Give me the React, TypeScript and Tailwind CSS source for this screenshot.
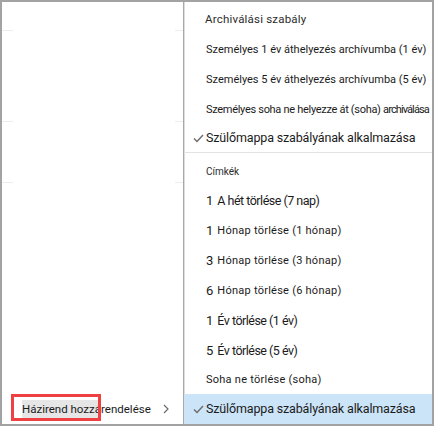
import React, { FC } from 'react'

const font = { fontFamily: 'Roboto, "Liberation Sans", Arial, sans-serif' }

const Check: FC = () => (
  <svg width="11" height="9" viewBox="0 0 11 9" className="shrink-0">
    <path d="M1 4.5 L4 7.5 L10 1" fill="none" stroke="#6b6b6b" strokeWidth="1.4" />
  </svg>
)

const archiveItems = [
  'Személyes 1 év áthelyezés archívumba (1 év)',
  'Személyes 5 év áthelyezés archívumba (5 év)',
]

const tagItems = [
  { num: '1', label: 'A hét törlése (7 nap)', big: true },
  { num: '1', label: 'Hónap törlése (1 hónap)', big: false },
  { num: '3', label: 'Hónap törlése (3 hónap)', big: false },
  { num: '6', label: 'Hónap törlése (6 hónap)', big: false },
  { num: '1', label: 'Év törlése (1 év)', big: true },
  { num: '5', label: 'Év törlése (5 év)', big: true },
  { num: '', label: 'Soha ne törlése (soha)', big: false },
]

const Stub: FC = () => (
  <div className="flex h-px justify-between">
    <div className="w-[11px] bg-[#ececec]" />
    <div className="w-[8px] bg-[#ececec]" />
  </div>
)

const App: FC = () => {
  return (
    <div className="h-[426px] w-[434px] overflow-hidden whitespace-nowrap border-2 border-[#a3a3a3] bg-white text-[#1b1b1b]" style={font}>
      <div className="flex h-full">
        {/* left pane */}
        <div className="flex w-[181px] shrink-0 flex-col">
          <div className="h-[28px]" />
          <Stub />
          <div className="h-[90px]" />
          <Stub />
          <div className="h-[60px]" />
          <Stub />
          <div className="flex-1" />
          <div className="relative flex h-[30px] items-center pl-[20px] pr-[14px]">
            <span className="bg-[#e6e6e6] text-[11.5px] leading-[19px]">Házirend hozzá</span>
            <span className="text-[11.5px] leading-[19px]">rendelése</span>
            <svg width="6" height="10" viewBox="0 0 6 10" className="ml-auto">
              <path d="M1 1 L5 5 L1 9" fill="none" stroke="#6b6b6b" strokeWidth="1.2" />
            </svg>
            <div className="absolute left-[9px] top-[0px] h-[27px] w-[90px] border-[3px] border-[#ef4044]" />
          </div>
        </div>

        {/* menu */}
        <div className="flex min-w-0 flex-1 flex-col overflow-hidden border-l border-[#a8a8a8] shadow-[inset_1px_0_0_#dcdcdc]">
          <div className="h-[3px]" />
          <div className="flex h-[30px] items-center pl-[21px] text-[11.5px] tracking-[0.2px] text-[#2b2b2b]">
            Archiválási szabály
          </div>
          {archiveItems.map(item => (
            <div className="flex h-[30px] items-center pl-[22px] text-[11px]" key={item}>
              {item}
            </div>
          ))}
          <div className="flex h-[30px] items-center pl-[22px] text-[11px] tracking-[-0.3px]">
            Személyes soha ne helyezze át (soha)&nbsp;<span className="tracking-[-0.9px]">archiválása</span>
          </div>
          <div className="flex h-[27px] items-center pl-[9px]">
            <Check />
            <span className="ml-[2px] text-[12.5px] tracking-[-0.15px]">Szülőmappa szabályának alkalmazása</span>
          </div>
          <div className="h-px bg-[#e3e3e3]" />
          <div className="flex h-[33px] items-center pl-[22px] pt-[3px] text-[10px] text-[#2b2b2b]">Címkék</div>
          {tagItems.map((t, i) => (
            <div className={`flex items-center pl-[22px] ${i === tagItems.length - 1 ? 'h-[28px]' : 'h-[30px]'}`} key={i}>
              {t.num && <span className="mr-[4px] text-[13px]">{t.num}</span>}
              <span className={t.big ? 'text-[12.5px] tracking-[-0.5px]' : 'text-[11px] tracking-[0.25px]'}>{t.label}</span>
            </div>
          ))}
          <div className="flex flex-1 items-center bg-[#cce4f7] pl-[9px]">
            <Check />
            <span className="ml-[2px] text-[12.5px] tracking-[-0.15px]">Szülőmappa szabályának alkalmazása</span>
          </div>
        </div>
      </div>
    </div>
  )
}

export default App
